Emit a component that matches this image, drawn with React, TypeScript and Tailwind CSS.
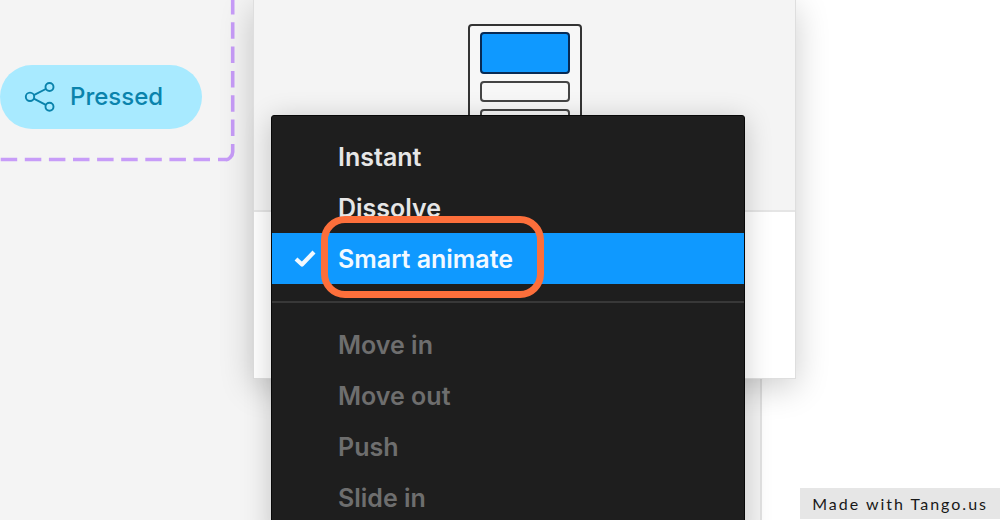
import clsx from "clsx";

const animations = ["Instant", "Dissolve", "Smart animate"];
const disabledAnimations = ["Move in", "Move out", "Push", "Slide in"];

function ShareIcon() {
  return (
    <svg
      className="h-8 w-8 shrink-0"
      viewBox="0 0 32 32"
      fill="none"
      stroke="currentColor"
      strokeWidth="1.9"
      aria-hidden="true"
    >
      <circle cx="6" cy="15.8" r="4.2" />
      <circle cx="25.5" cy="6" r="4" />
      <circle cx="25.5" cy="25.8" r="4" />
      <path d="M9.800 14.100 21.800 8M9.800 17.600l12 6.300" />
    </svg>
  );
}

function CheckIcon() {
  return (
    <svg
      className="h-6 w-6"
      viewBox="0 0 24 24"
      fill="none"
      stroke="currentColor"
      strokeWidth="4.2"
      strokeLinejoin="round"
      aria-hidden="true"
    >
      <path d="M3 12 9 17.500 21 5" />
    </svg>
  );
}

// Component set frame on the canvas
function VariantFrame() {
  return (
    <div className="relative w-[236px] pt-[65px] pb-[34px]">
      <svg
        className="pointer-events-none absolute inset-0 h-full w-full"
        fill="none"
        stroke="#c79cf8"
        strokeWidth="3.6"
        aria-hidden="true"
      >
        <path d="M232.700 144v8q0 3-2.500 5.500T226 159.500h-8" />
        <path d="M232.700 136V-10" strokeDasharray="16.500 7.800" />
        <path d="M210 159.500H0" strokeDasharray="16.500 7.600" />
      </svg>
      <button
        type="button"
        className="flex h-16 w-[202px] items-center gap-3.5 rounded-full bg-[#a8eaff] pl-6 text-2xl font-medium text-[#0a83ac]"
      >
        <ShareIcon />
        Pressed
      </button>
    </div>
  );
}

function TransitionPreview() {
  return (
    <div className="flex h-[212px] justify-center border-b-2 border-[#e5e5e5] bg-[#f4f4f4] pt-6">
      <div className="flex h-40 w-[114px] flex-col gap-[7px] rounded-t border-2 border-[#333] bg-[#f7f7f7] px-2.5 pt-1.5">
        <div className="h-[42px] rounded border-2 border-[#072a55] bg-[#0f99ff]" />
        <div className="h-[21px] rounded border-2 border-[#444]" />
        <div className="h-[21px] rounded border-2 border-[#444]" />
      </div>
    </div>
  );
}

function MenuItem({
  label,
  selected,
  disabled,
}: {
  label: string;
  selected?: boolean;
  disabled?: boolean;
}) {
  return (
    <button
      type="button"
      role="menuitemradio"
      aria-checked={!!selected}
      disabled={disabled}
      className={clsx(
        "flex h-[51px] w-full items-center text-left text-[25px] leading-10 font-semibold",
        disabled ? "text-[#6e6e6e]" : "text-[#e6e6e6]",
        selected && "bg-[#0f99ff] text-[#f2f9ff]"
      )}
    >
      <span className="flex w-[66px] shrink-0 justify-center">
        {selected && <CheckIcon />}
      </span>
      {selected ? (
        <span className="relative">
          {label}
          <span className="pointer-events-none absolute -top-[23px] -right-[31px] -bottom-[19px] -left-[17px] rounded-3xl border-[7px] border-[#fd6f3b]" />
        </span>
      ) : (
        label
      )}
    </button>
  );
}

function AnimationMenu() {
  return (
    <div
      role="menu"
      className="absolute top-[115px] left-[17px] w-[474px] rounded-t-[3px] border border-[#080808] bg-[#1e1e1e] pt-[15px] pb-4 shadow-[0_4px_28px_rgba(0,0,0,0.2)]"
    >
      {animations.map((label) => (
        <MenuItem key={label} label={label} selected={label === "Smart animate"} />
      ))}
      <hr className="mt-[17px] mb-4 border-t-2 border-[#383838]" />
      {disabledAnimations.map((label) => (
        <MenuItem key={label} label={label} disabled />
      ))}
    </div>
  );
}

export default function App() {
  return (
    <div className="relative flex h-screen overflow-hidden bg-white font-['Inter','Liberation_Sans',sans-serif]">
      <main className="w-[762px] shrink-0 border-r-2 border-[#e3e3e3] bg-[#f4f4f4]">
        <VariantFrame />
      </main>

      <section
        aria-label="Interaction details"
        className="absolute top-0 left-[253px] w-[543px] border-x border-b border-[#dedede] bg-white shadow-[0_8px_32px_rgba(0,0,0,0.2)]"
      >
        <TransitionPreview />
        <div className="h-[166px]" />
        <AnimationMenu />
      </section>

      <a
        href="#tango"
        className="absolute right-0 bottom-0 mb-px bg-[#e6e6e6] px-3 pt-1 pb-[3px] font-['Lato','Liberation_Sans',sans-serif] text-base tracking-[2px] text-[#181818]"
      >
        Made with Tango.us
      </a>
    </div>
  );
}
